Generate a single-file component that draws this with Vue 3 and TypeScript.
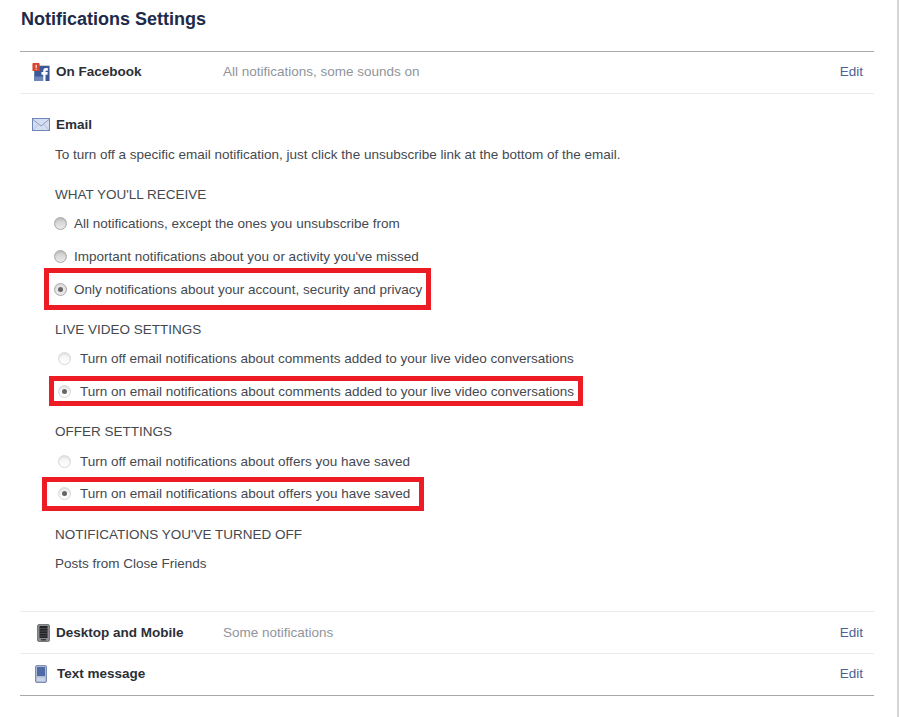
<template>
  <div class="page">
    <h1 class="title">Notifications Settings</h1>
    <div class="panel">
      <div class="row first">
        <svg class="icon ic-fb" width="18" height="18" viewBox="0 0 19 20">
          <rect x="2" y="3" width="17" height="17" fill="#3b5998" />
          <rect x="2" y="15" width="10" height="5" fill="#6f86b8" />
          <path d="M12 20v-7h-2v-3h2V8.500C12 6.500 13.200 5.500 15 5.500h2v3h-1.500c-.7 0-1 .3-1 1V10H17l-.4 3h-2.100v7z" fill="#fff" />
          <rect x="0" y="0" width="8" height="9" rx="1" fill="#d9432f" />
          <rect x="3.500" y="2" width="1.200" height="3.500" fill="#fff" />
          <rect x="3.500" y="6.300" width="1.200" height="1.200" fill="#fff" />
        </svg>
        <span class="row-name">On Facebook</span>
        <span class="row-value">All notifications, some sounds on</span>
        <a class="edit">Edit</a>
      </div>

      <div class="email">
        <div class="email-head">
          <svg class="icon" width="18" height="13" viewBox="0 0 18 13">
            <rect x="0.500" y="0.500" width="17" height="12" fill="#d5ddf0" stroke="#6f86b8" />
            <path d="M1 1.500 9 8l8-6.500" fill="none" stroke="#8a9cc6" />
            <path d="M1 12l5.500-6M17 12l-5.500-6" fill="none" stroke="#b4c1de" />
          </svg>
          <span class="row-name">Email</span>
        </div>
        <p class="hint">To turn off a specific email notification, just click the unsubscribe link at the bottom of the email.</p>

        <div class="group-label receive">WHAT YOU'LL RECEIVE</div>
        <label v-for="opt in receiveOptions" :key="opt.text" class="opt">
          <span class="radio grey" :class="{ on: opt.on }"></span>
          <span>{{ opt.text }}</span>
        </label>

        <div class="group-label live">LIVE VIDEO SETTINGS</div>
        <label v-for="opt in liveOptions" :key="opt.text" class="opt wide">
          <span class="radio" :class="{ on: opt.on }"></span>
          <span>{{ opt.text }}</span>
        </label>

        <div class="group-label offer">OFFER SETTINGS</div>
        <label v-for="opt in offerOptions" :key="opt.text" class="opt wide tight">
          <span class="radio" :class="{ on: opt.on }"></span>
          <span>{{ opt.text }}</span>
        </label>

        <div class="group-label off">NOTIFICATIONS YOU'VE TURNED OFF</div>
        <p class="hint closing">Posts from Close Friends</p>
      </div>

      <div class="row">
        <svg class="icon ic-desk" width="13" height="18" viewBox="0 0 13 18">
          <rect x="0.500" y="0.500" width="12" height="17" rx="1.500" fill="#8b8d90" stroke="#77797c" />
          <rect x="2.500" y="2" width="8" height="12" fill="#232427" />
          <path d="M3 4.500h7M3 7h7M3 9.500h7M3 12h7" stroke="#4a4b4e" />
          <rect x="4" y="15" width="5" height="1.500" fill="#3a3b3d" />
        </svg>
        <span class="row-name">Desktop and Mobile</span>
        <span class="row-value">Some notifications</span>
        <a class="edit">Edit</a>
      </div>
      <div class="row last">
        <svg class="icon ic-text" width="12" height="18" viewBox="0 0 12 18">
          <rect x="0.500" y="0.500" width="11" height="17" rx="1.500" fill="#aebad6" stroke="#7c8cb0" />
          <rect x="2" y="2" width="8" height="9" fill="#4f6ba3" />
          <rect x="2" y="12.500" width="8" height="3.500" fill="#ccd4e6" />
        </svg>
        <span class="row-name">Text message</span>
        <a class="edit">Edit</a>
      </div>
    </div>

    <div class="mark mark-a"></div>
    <div class="mark mark-b"></div>
    <div class="mark mark-c"></div>
  </div>
</template>

<script setup lang="ts">
interface Option {
  text: string
  on: boolean
}

const receiveOptions: Option[] = [
  { text: 'All notifications, except the ones you unsubscribe from', on: false },
  { text: "Important notifications about you or activity you've missed", on: false },
  { text: 'Only notifications about your account, security and privacy', on: true }
]

const liveOptions: Option[] = [
  { text: 'Turn off email notifications about comments added to your live video conversations', on: false },
  { text: 'Turn on email notifications about comments added to your live video conversations', on: true }
]

const offerOptions: Option[] = [
  { text: 'Turn off email notifications about offers you have saved', on: false },
  { text: 'Turn on email notifications about offers you have saved', on: true }
]
</script>

<style>
html, body { background: #fff; }
</style>

<style scoped>
.page {
  position: relative;
  width: 899px;
  height: 717px;
  box-sizing: border-box;
  padding: 0 23px 0 20px;
  border-right: 2px solid #d6d6d6;
  overflow: hidden;
  font-family: "Liberation Sans", Arial, sans-serif;
  font-size: 13.5px;
  color: #444950;
}

.title {
  margin: 0;
  padding: 9px 0 0 1px;
  height: 51px;
  box-sizing: border-box;
  font-size: 18px;
  line-height: 20px;
  font-weight: 700;
  color: #1d2a4a;
}

.panel {
  border-top: 1px solid #a8a8a8;
  border-bottom: 1px solid #a8a8a8;
}

.row {
  display: flex;
  align-items: center;
  height: 42px;
  box-sizing: border-box;
  padding: 0 11px 0 12px;
  border-bottom: 1px solid #e9ebee;
}
.row.first { padding-bottom: 2px; }
.row.last { height: 41px; padding-bottom: 2px; border-bottom: none; }

.icon { flex: none; }
.ic-fb { margin-right: 6px; }
.ic-desk { margin: 0 6px 0 5px; }
.ic-text { margin: 0 10px 0 3px; }

.row-name {
  width: 167px;
  flex: none;
  font-weight: 700;
  color: #2b2f36;
}

.row-value {
  color: #90949c;
}

.edit {
  margin-left: auto;
  color: #4b6294;
}

.email {
  padding: 0 0 37px 12px;
  border-bottom: 1px solid #e9ebee;
}

.email-head {
  display: flex;
  align-items: center;
  gap: 6px;
  height: 20px;
  margin-top: 20px;
}

.hint {
  margin: 11px 0 0 23px;
  line-height: 20px;
}
.hint.closing { margin-top: 9px; }

.group-label {
  margin-left: 23px;
  line-height: 20px;
}
.group-label.receive { margin: 20px 0 2px 23px; }
.group-label.live { margin: 14px 0 2px 23px; }
.group-label.offer { margin: 14px 0 3px 23px; }
.group-label.off { margin-top: 16px; }

.opt {
  display: flex;
  align-items: center;
  gap: 7px;
  height: 33px;
  margin-left: 22px;
}
.opt.wide { gap: 9px; margin-left: 26px; }
.opt.tight { height: 32px; }

.radio {
  position: relative;
  flex: none;
  width: 13px;
  height: 13px;
  box-sizing: border-box;
  border-radius: 50%;
  border: 1px solid #d8d8d8;
  background: linear-gradient(#f1f1f1, #fff);
  box-shadow: inset 0 1px 2px rgba(0, 0, 0, 0.1);
}
.radio.grey {
  border-color: #a9a9a9;
  background: linear-gradient(#c9c9c9, #ececec);
}
.radio.on::after {
  content: "";
  position: absolute;
  left: 3px;
  top: 3px;
  width: 5px;
  height: 5px;
  border-radius: 50%;
  background: #666;
}
.radio.grey.on { background: #e8e8e8; }

.mark {
  position: absolute;
  box-sizing: border-box;
  border: 5px solid #ed1c24;
}
.mark-a { left: 44px; top: 268px; width: 387px; height: 42px; }
.mark-b { left: 49px; top: 376px; width: 534px; height: 30px; }
.mark-c { left: 42px; top: 477px; width: 382px; height: 34px; }
</style>
